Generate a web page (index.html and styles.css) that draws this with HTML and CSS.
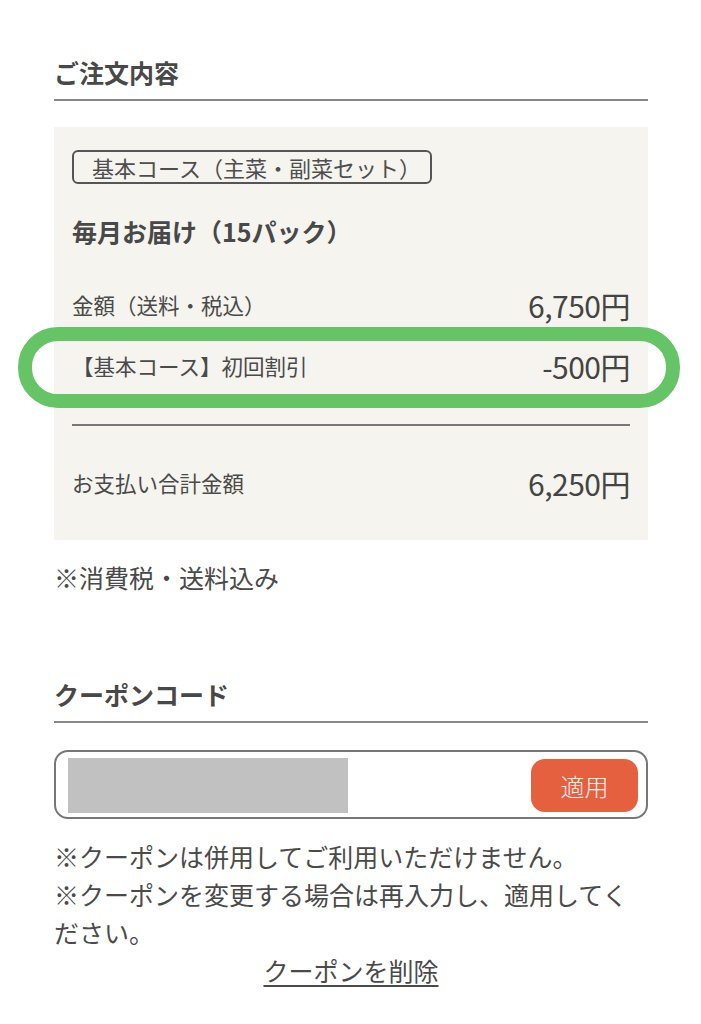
FILE: index.html
```html
<!DOCTYPE html>
<html lang="ja">
<head>
<meta charset="utf-8">
<title>ご注文内容</title>
<link rel="stylesheet" href="styles.css">
</head>
<body>
<main class="page">
  <section class="order">
    <h2 class="section-title">ご注文内容</h2>
    <div class="summary">
      <span class="tag">基本コース（主菜・副菜セット）</span>
      <p class="plan">毎月お届け（15パック）</p>
      <div class="row first">
        <span class="label">金額（送料・税込）</span>
        <span class="price">6,750円</span>
      </div>
      <div class="row discount">
        <span class="label">【基本コース】初回割引</span>
        <span class="price">-500円</span>
        <span class="highlight" aria-hidden="true"></span>
      </div>
      <div class="divider"></div>
      <div class="row total">
        <span class="label">お支払い合計金額</span>
        <span class="price">6,250円</span>
      </div>
    </div>
    <p class="note">※消費税・送料込み</p>
  </section>

  <section class="coupon">
    <h2 class="section-title">クーポンコード</h2>
    <div class="coupon-field">
      <span class="coupon-input"></span>
      <button class="apply" type="button">適用</button>
    </div>
    <p class="coupon-notes">※クーポンは併用してご利用いただけません。<br>※クーポンを変更する場合は再入力し、適用してください。</p>
    <p class="remove"><a href="#" class="remove-link">クーポンを削除</a></p>
  </section>
</main>
</body>
</html>
```

FILE: styles.css
```css
* {
  box-sizing: border-box;
}

html, body {
  margin: 0;
  padding: 0;
  background: #ffffff;
}

body {
  font-family: "Noto Sans CJK JP", "Noto Sans", sans-serif;
  color: #4a4a4a;
}

.page {
  padding: 54px 53px 40px 54px;
}

.section-title {
  margin: 0;
  font-size: 25px;
  font-weight: 700;
  line-height: 36px;
  padding-bottom: 9px;
  border-bottom: 2px solid #888888;
  color: #484848;
}

.summary {
  margin-top: 26px;
  background: #f5f4ee;
  padding: 23px 18px 37px 18px;
}

.tag {
  display: inline-block;
  border: 2px solid #555555;
  border-radius: 6px;
  font-size: 22px;
  line-height: 30px;
  padding: 0 9px 0 18px;
  color: #4e4e4e;
}

.plan {
  margin: 29px 0 0 0;
  font-size: 25px;
  font-weight: 700;
  line-height: 36px;
  color: #484848;
}

.row {
  display: flex;
  justify-content: space-between;
  align-items: center;
  height: 40px;
  position: relative;
}

.row.first {
  margin-top: 36px;
}

.row.discount {
  margin-top: 21px;
}

.row.total {
  margin-top: 37px;
}

.label {
  font-size: 21.5px;
  line-height: 40px;
}

.price {
  font-size: 30px;
  font-weight: 400;
  line-height: 40px;
  color: #444444;
  letter-spacing: -0.5px;
}

.highlight {
  position: absolute;
  left: -54px;
  right: -50px;
  top: -19px;
  bottom: -22px;
  border: 14px solid #64c466;
  border-radius: 40px;
  pointer-events: none;
}

.divider {
  margin-top: 38px;
  height: 2px;
  background: #777777;
}

.note {
  margin: 18px 0 0 0;
  font-size: 25px;
  line-height: 38px;
}

.coupon {
  margin-top: 80px;
}

.coupon-field {
  margin-top: 27px;
  height: 69px;
  border: 2px solid #777777;
  border-radius: 14px;
  display: flex;
  align-items: center;
  justify-content: space-between;
  padding: 1px 8px 0 12px;
  background: #ffffff;
}

.coupon-input {
  display: block;
  width: 280px;
  height: 55px;
  background: #c1c1c1;
}

.apply {
  width: 107px;
  height: 53px;
  border: none;
  border-radius: 14px;
  background: #e4603f;
  color: #fff3ef;
  font-family: "Noto Sans CJK JP", sans-serif;
  font-size: 24px;
  font-weight: 300;
  padding: 0;
}

.coupon-notes {
  margin: 18px 0 0 0;
  font-size: 25px;
  line-height: 38px;
}

.remove {
  margin: 0;
  text-align: center;
  font-size: 25px;
  line-height: 38px;
}

.remove-link {
  color: #4a4a4a;
  text-decoration: underline;
  text-underline-offset: 4px;
}
```
